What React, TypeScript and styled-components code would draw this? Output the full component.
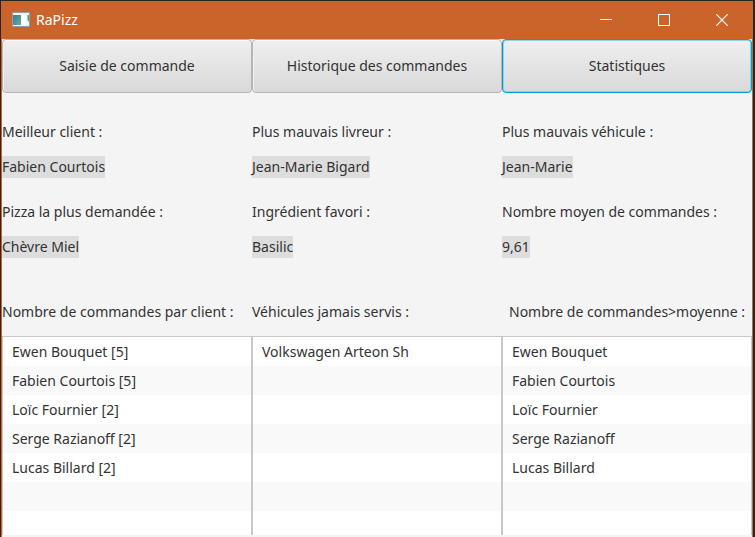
import React from "react";
import styled, { createGlobalStyle } from "styled-components";

const GlobalStyle = createGlobalStyle`
  * { box-sizing: border-box; }
  body {
    margin: 0;
    background: #262626;
    color: #333333;
    font-family: "Noto Sans", "Open Sans", sans-serif;
    font-size: 14px;
    line-height: 22px;
  }
`;

const Window = styled.div`
  display: flex;
  flex-direction: column;
  min-height: 100vh;
  padding: 1px 2px 0 1px;
`;

const TitleBar = styled.header`
  display: flex;
  align-items: center;
  height: 38px;
  padding: 0 2px 0 11px;
  background: #cb642a;
  color: #ffffff;
`;

const AppIcon = styled.svg`
  width: 18px;
  height: 16px;
  margin-right: 6px;
`;

const Title = styled.h1`
  flex: 1;
  margin: 0;
  font-size: 14px;
  font-weight: 400;
`;

const CaptionButton = styled.button`
  display: flex;
  align-items: center;
  justify-content: center;
  width: 58px;
  height: 38px;
  padding: 0;
  border: 0;
  background: transparent;
  color: inherit;
`;

const Content = styled.main`
  display: flex;
  flex: 1;
  flex-direction: column;
  padding-bottom: 2px;
  border: solid #cb642a;
  border-width: 0 1px;
  background: #f4f4f4;
`;

const Columns = styled.div`
  display: grid;
  grid-template-columns: repeat(3, minmax(0, 1fr));
`;

const Tabs = styled(Columns).attrs({ as: "nav" })`
  margin-bottom: 28px;
`;

const TabButton = styled.button<{ $active?: boolean }>`
  height: 54px;
  padding: 0 8px;
  border: 1px solid ${(p) => (p.$active ? "#039ed3" : "#b5b5b5")};
  border-radius: 4px;
  background: linear-gradient(#efefef, #d9d9d9);
  box-shadow: ${(p) =>
    p.$active
      ? "inset 0 0 0 1px #8fd0e6"
      : "inset 0 1px 0 #fafafa, inset 1px 0 0 #f0f0f0"};
  color: #333333;
  font: inherit;
`;

const Stats = styled(Columns).attrs({ as: "dl" })`
  row-gap: 23px;
  margin: 0 0 43px;
`;

const Term = styled.dt`
  margin-bottom: 13px;
  white-space: nowrap;
`;

const Value = styled.dd`
  width: fit-content;
  margin: 0;
  background: #dddddd;
`;

const Lists = styled(Columns)`
  flex: 1;
`;

const ListPanel = styled.section`
  display: flex;
  flex-direction: column;
`;

const ListTitle = styled.h2<{ $centered?: boolean }>`
  margin: 0 0 13px;
  font-size: 14px;
  font-weight: 400;
  text-align: ${(p) => (p.$centered ? "center" : "left")};
  white-space: nowrap;
`;

const List = styled.ul`
  flex: 1 0 0;
  min-height: 174px;
  margin: 0;
  padding: 0;
  overflow: hidden;
  border: solid #c8c8c8;
  border-width: 1px 1px 0;
  background: #ffffff;
  list-style: none;
`;

const ListRow = styled.li`
  height: 29px;
  padding: 4px 9px;

  &:nth-child(even) {
    background: #f9f9f9;
  }
`;

const tabs = ["Saisie de commande", "Historique des commandes", "Statistiques"];

const stats = [
  ["Meilleur client :", "Fabien Courtois"],
  ["Plus mauvais livreur :", "Jean-Marie Bigard"],
  ["Plus mauvais véhicule :", "Jean-Marie"],
  ["Pizza la plus demandée :", "Chèvre Miel"],
  ["Ingrédient favori :", "Basilic"],
  ["Nombre moyen de commandes :", "9,61"],
];

const lists = [
  {
    title: "Nombre de commandes par client :",
    rows: [
      "Ewen Bouquet [5]",
      "Fabien Courtois [5]",
      "Loïc Fournier [2]",
      "Serge Razianoff [2]",
      "Lucas Billard [2]",
    ],
  },
  { title: "Véhicules jamais servis :", rows: ["Volkswagen Arteon Sh"] },
  {
    title: "Nombre de commandes>moyenne :",
    centered: true,
    rows: ["Ewen Bouquet", "Fabien Courtois", "Loïc Fournier", "Serge Razianoff", "Lucas Billard"],
  },
];

const VISIBLE_ROWS = 6;

function padRows(rows: string[]) {
  return [...rows, ...Array<string>(Math.max(0, VISIBLE_ROWS - rows.length)).fill("")];
}

export default function App() {
  return (
    <>
      <GlobalStyle />
      <Window>
        <TitleBar>
          <AppIcon viewBox="0 0 18 16" aria-hidden="true">
            <defs>
              <linearGradient id="pane" x1="0" y1="0" x2="1" y2="1">
                <stop offset="0" stopColor="#3f78a8" />
                <stop offset="1" stopColor="#5cb08a" />
              </linearGradient>
            </defs>
            <rect x="0" y="0" width="18" height="15" fill="#9a9b9c" />
            <rect x="1" y="1" width="16" height="13" fill="#f3f5f5" />
            <rect x="1" y="3" width="8" height="10" fill="url(#pane)" />
            <rect x="10" y="3" width="4" height="10" fill="#ffffff" />
            <path d="M15.5 3H17v7l-1.5-2z" fill="#4f9c86" />
          </AppIcon>
          <Title>RaPizz</Title>
          <CaptionButton aria-label="Réduire">
            <svg width="12" height="12" viewBox="0 0 12 12">
              <path d="M0 5.5h12" stroke="currentColor" />
            </svg>
          </CaptionButton>
          <CaptionButton aria-label="Agrandir">
            <svg width="12" height="12" viewBox="0 0 12 12">
              <rect x="0.5" y="0.5" width="11" height="11" fill="none" stroke="currentColor" />
            </svg>
          </CaptionButton>
          <CaptionButton aria-label="Fermer">
            <svg width="12" height="12" viewBox="0 0 12 12">
              <path d="M0.3 0.3l11.4 11.4M11.7 0.3L0.3 11.7" stroke="currentColor" strokeWidth="1.2" />
            </svg>
          </CaptionButton>
        </TitleBar>
        <Content>
          <Tabs>
            {tabs.map((label) => (
              <TabButton key={label} $active={label === "Statistiques"}>
                {label}
              </TabButton>
            ))}
          </Tabs>
          <Stats>
            {stats.map(([term, value]) => (
              <div key={term}>
                <Term>{term}</Term>
                <Value>{value}</Value>
              </div>
            ))}
          </Stats>
          <Lists>
            {lists.map(({ title, centered, rows }) => (
              <ListPanel key={title}>
                <ListTitle $centered={centered}>{title}</ListTitle>
                <List>
                  {padRows(rows).map((row, index) => (
                    <ListRow key={index}>{row}</ListRow>
                  ))}
                </List>
              </ListPanel>
            ))}
          </Lists>
        </Content>
      </Window>
    </>
  );
}
